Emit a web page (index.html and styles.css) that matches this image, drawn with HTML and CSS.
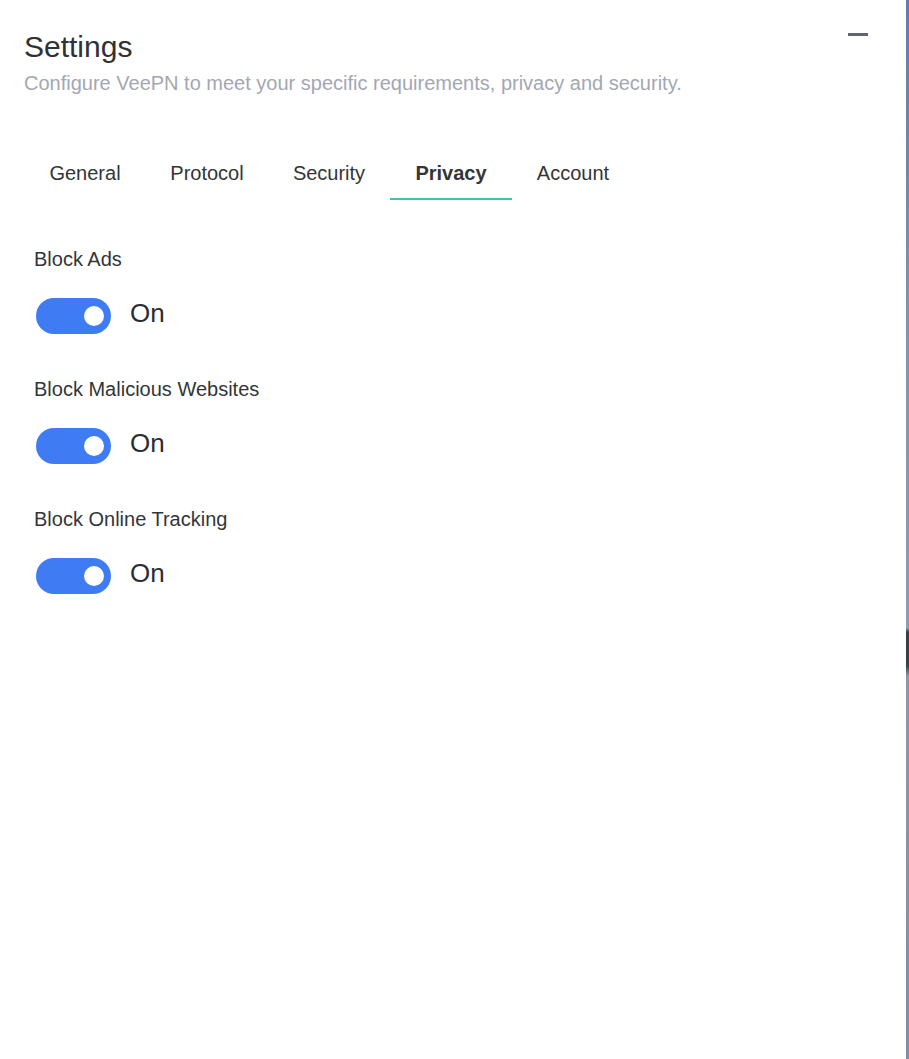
FILE: index.html
```html
<!DOCTYPE html>
<html lang="en">
<head>
<meta charset="utf-8">
<title>Settings</title>
<link rel="stylesheet" href="styles.css">
</head>
<body>
<div class="frame">
  <main class="panel">
    <header class="header">
      <div class="heading">
        <h1 class="title">Settings</h1>
        <p class="subtitle">Configure VeePN to meet your specific requirements, privacy and security.</p>
      </div>
      <button class="minimize" aria-label="Minimize"><span class="minimize-bar"></span></button>
    </header>

    <nav class="tabs">
      <div class="tab">General</div>
      <div class="tab">Protocol</div>
      <div class="tab">Security</div>
      <div class="tab tab-active">Privacy</div>
      <div class="tab">Account</div>
    </nav>

    <section class="settings">
      <div class="setting">
        <div class="setting-label">Block Ads</div>
        <div class="setting-control">
          <span class="toggle"><span class="knob"></span></span>
          <span class="state">On</span>
        </div>
      </div>
      <div class="setting">
        <div class="setting-label">Block Malicious Websites</div>
        <div class="setting-control">
          <span class="toggle"><span class="knob"></span></span>
          <span class="state">On</span>
        </div>
      </div>
      <div class="setting">
        <div class="setting-label">Block Online Tracking</div>
        <div class="setting-control">
          <span class="toggle"><span class="knob"></span></span>
          <span class="state">On</span>
        </div>
      </div>
    </section>
  </main>
  <div class="edge"></div>
</div>
</body>
</html>
```

FILE: styles.css
```css
html, body {
  margin: 0;
  padding: 0;
  background: #ffffff;
}

body {
  font-family: "Liberation Sans", Arial, sans-serif;
  color: #333538;
}

.frame {
  display: flex;
  width: 909px;
  height: 1059px;
  overflow: hidden;
}

.panel {
  flex: 1;
  background: #ffffff;
}

.edge {
  width: 3px;
  background: linear-gradient(to bottom,
    #5f7ea8 0px, #7d93b0 300px, #8b9bb3 600px,
    #8b9bb3 628px, #3b3f4a 632px, #3b3f4a 666px,
    #8a98ad 676px, #7f8fa8 1059px);
}

.header {
  display: flex;
  justify-content: space-between;
  align-items: flex-start;
  padding: 30px 38px 0 24px;
}

.title {
  margin: 0;
  font-size: 30px;
  line-height: 34px;
  font-weight: normal;
  color: #2f3135;
}

.subtitle {
  margin: 7px 0 0;
  font-size: 20px;
  line-height: 24px;
  color: #a3a7b2;
}

.minimize {
  margin: 3px 0 0;
  padding: 0;
  border: 0;
  background: none;
  width: 20px;
  height: 3px;
  display: flex;
}

.minimize-bar {
  display: block;
  width: 20px;
  height: 3px;
  background: #5f6571;
}

.tabs {
  display: flex;
  padding: 66px 0 0 24px;
}

.tab {
  width: 122px;
  text-align: center;
  font-size: 20px;
  line-height: 24px;
  padding-bottom: 13px;
  border-bottom: 2px solid transparent;
  color: #333538;
}

.tab-active {
  font-weight: bold;
  border-bottom-color: #3fc6a1;
}

.settings {
  display: flex;
  flex-direction: column;
  padding: 47px 0 0 34px;
}

.setting {
  height: 130px;
}

.setting-label {
  font-size: 20px;
  line-height: 24px;
  color: #333538;
}

.setting-control {
  display: flex;
  align-items: flex-start;
  gap: 19px;
  margin-top: 27px;
  padding-left: 2px;
}

.toggle {
  position: relative;
  display: block;
  width: 75px;
  height: 36px;
  border-radius: 18px;
  background: #3f7bf3;
}

.knob {
  position: absolute;
  top: 8px;
  right: 7px;
  width: 20px;
  height: 20px;
  border-radius: 50%;
  background: #ffffff;
}

.state {
  font-size: 26px;
  line-height: 30px;
  color: #2a2d33;
}
```
